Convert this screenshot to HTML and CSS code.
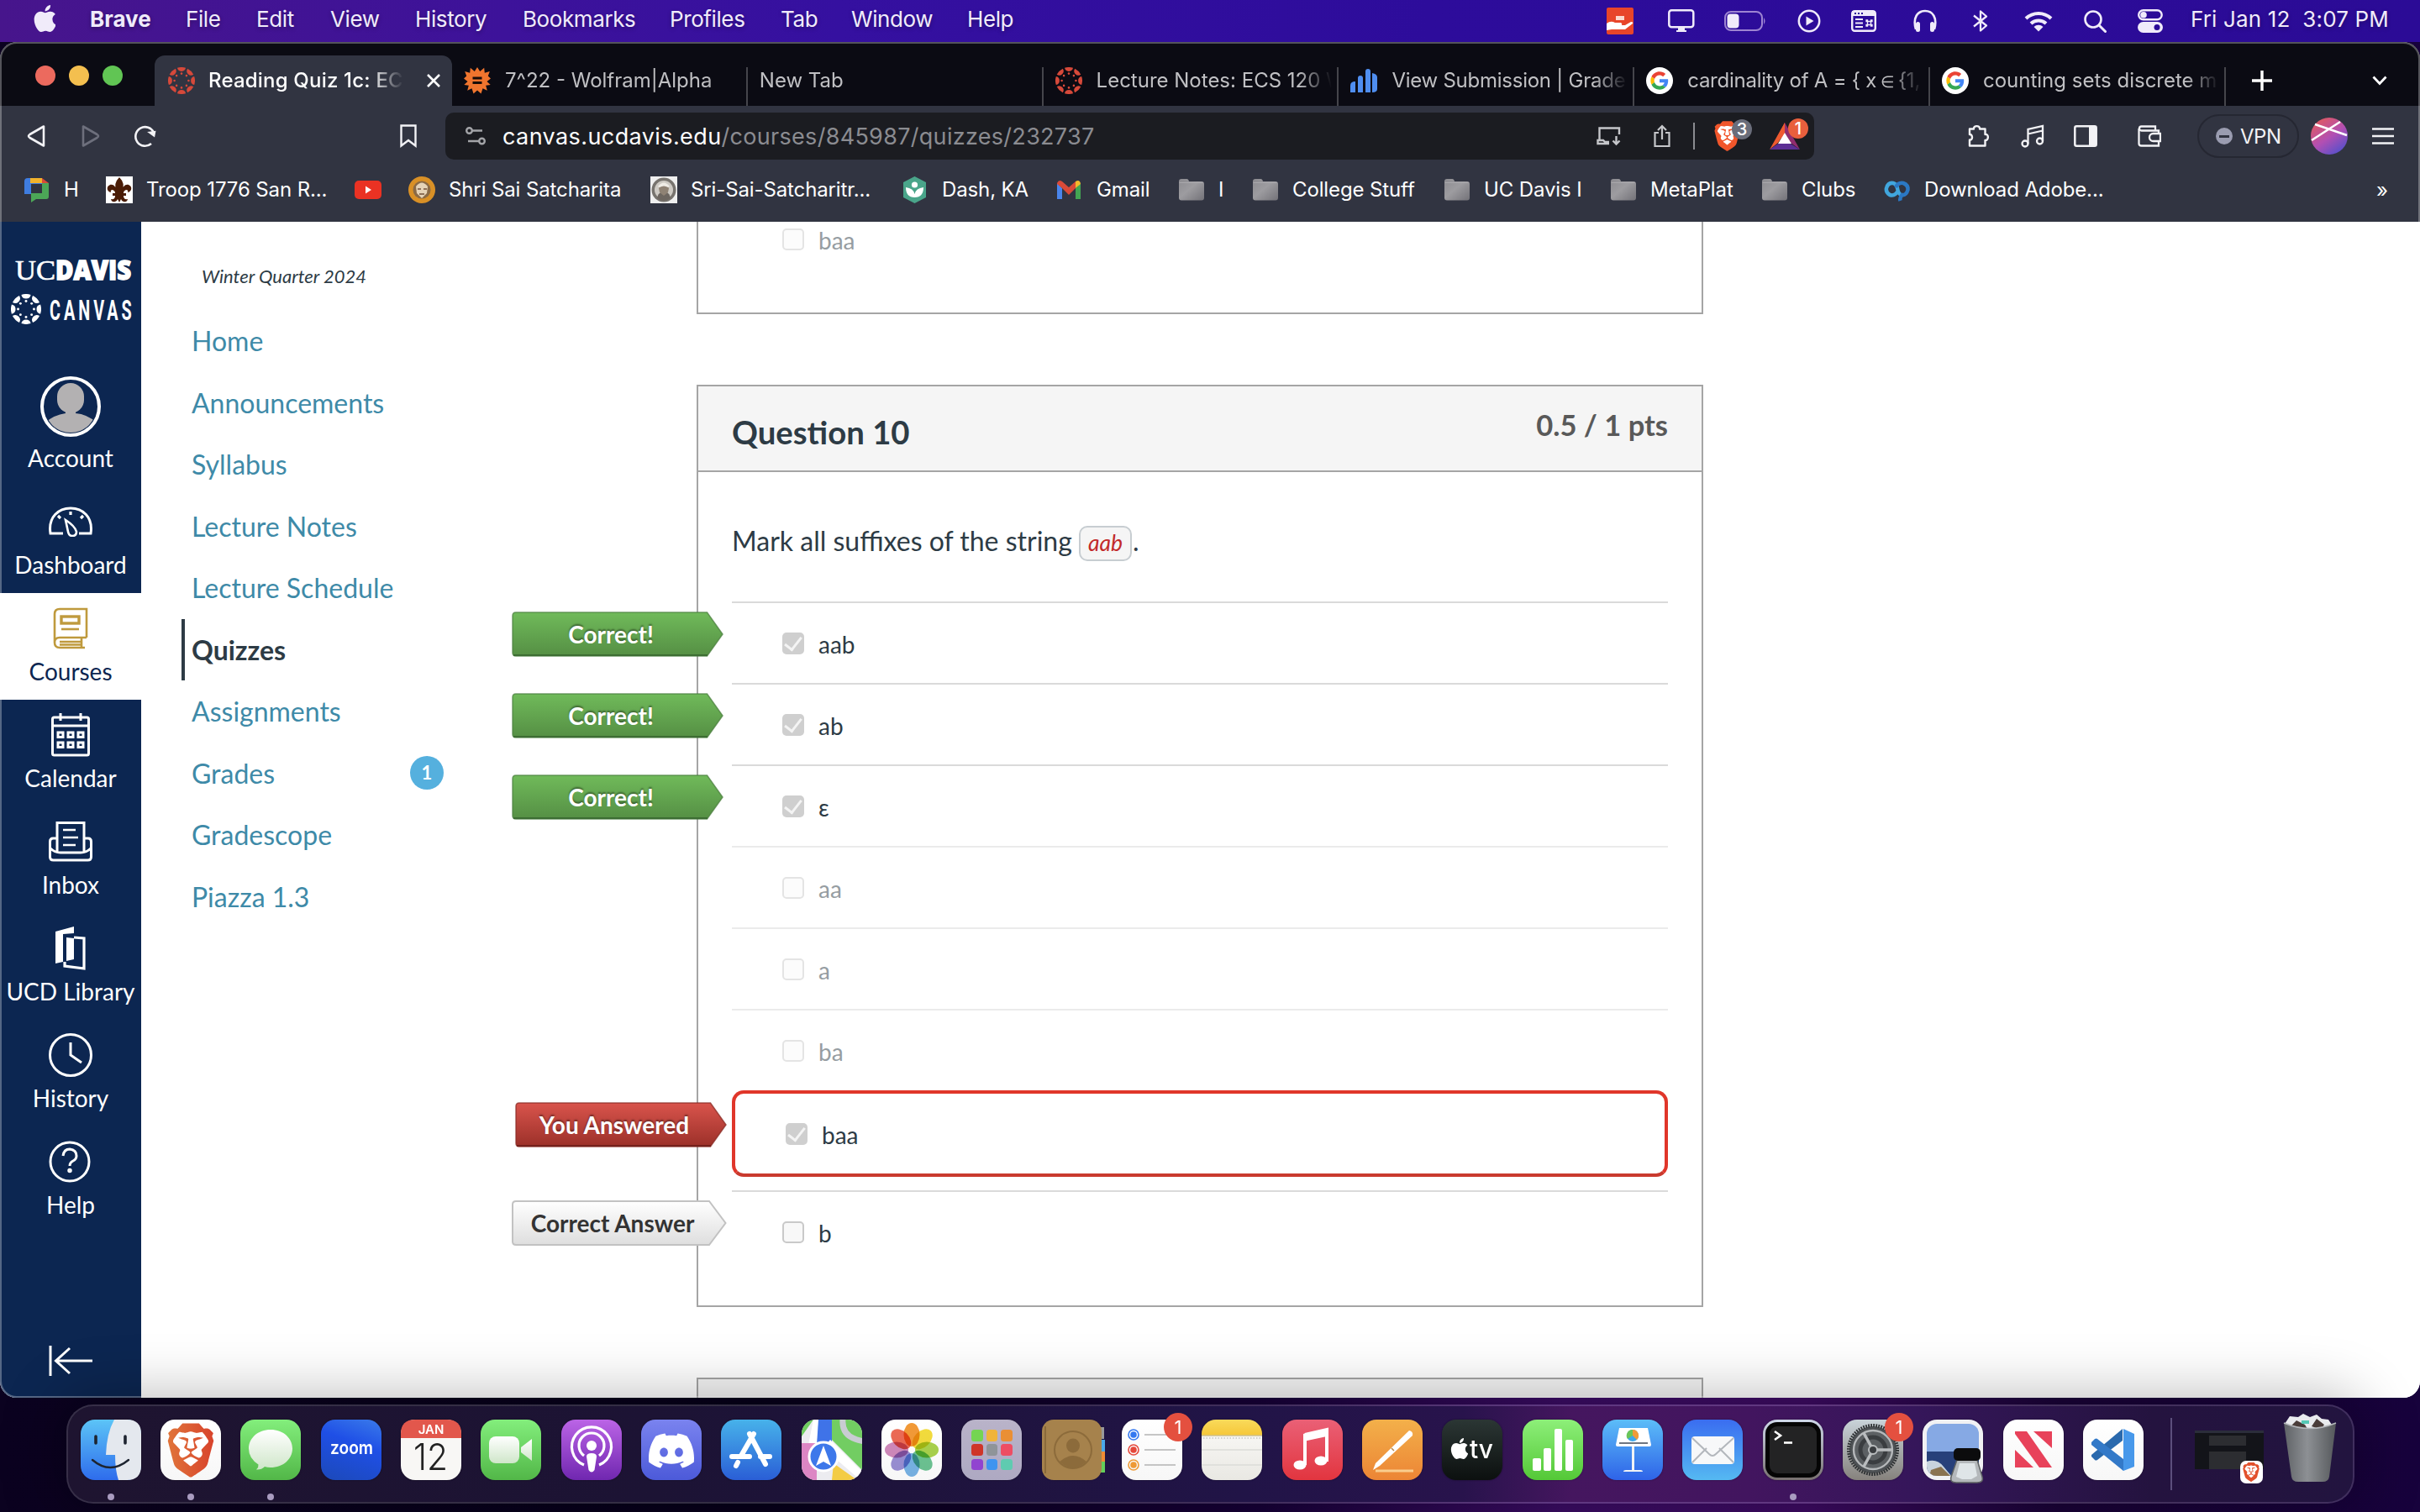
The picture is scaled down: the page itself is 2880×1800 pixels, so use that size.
FILE: index.html
```html
<!DOCTYPE html>
<html lang="en">
<head>
<meta charset="utf-8">
<title>Reading Quiz 1c: ECS 120</title>
<link rel="stylesheet" href="styles.css">
</head>
<body>
<svg class="defs" width="0" height="0" aria-hidden="true">
  <defs>
    <path id="seg" d="M-5-15.2A16 16 0 0 1 5-15.2A5.1 5.1 0 0 1-5-15.2z"/>
    <symbol id="ring" viewBox="-16 -16 32 32">
      <g id="half"><use href="#seg"/><use href="#seg" transform="rotate(45)"/><use href="#seg" transform="rotate(90)"/><use href="#seg" transform="rotate(135)"/><circle cy="-8.4" r="1.3"/><circle cx="5.9" cy="-5.9" r="1.3"/><circle cx="8.4" r="1.3"/><circle cx="5.9" cy="5.9" r="1.3"/></g>
      <use href="#half" transform="rotate(180)"/>
    </symbol>
    <symbol id="google" viewBox="-12 -12 72 72">
      <circle cx="24" cy="24" r="36" fill="#fff"/>
      <path fill="#EA4335" d="M24 9.5c3.54 0 6.71 1.22 9.21 3.6l6.85-6.85C35.9 2.38 30.47 0 24 0 14.62 0 6.51 5.38 2.56 13.22l7.98 6.19C12.43 13.72 17.74 9.5 24 9.5z"/>
      <path fill="#4285F4" d="M46.98 24.55c0-1.57-.15-3.09-.38-4.55H24v9.02h12.94c-.58 2.96-2.26 5.48-4.78 7.18l7.73 6c4.51-4.18 7.09-10.36 7.09-17.65z"/>
      <path fill="#FBBC05" d="M10.53 28.59c-.48-1.45-.76-2.99-.76-4.59s.27-3.14.76-4.59l-7.98-6.19C.92 16.46 0 20.12 0 24c0 3.88.92 7.54 2.56 10.78l7.97-6.19z"/>
      <path fill="#34A853" d="M24 48c6.48 0 11.93-2.13 15.89-5.81l-7.73-6c-2.15 1.45-4.92 2.3-8.16 2.3-6.26 0-11.57-4.22-13.47-9.91l-7.98 6.19C6.51 42.62 14.62 48 24 48z"/>
    </symbol>
    <linearGradient id="gBrave"><stop offset="0" stop-color="#e0743a"/><stop offset="1" stop-color="#d8432c"/></linearGradient>
    <symbol id="brave" viewBox="1.5 0 21 24">
      <path d="M5 3.5h14l1 5-3 8-5 4-5-4-3-8z" fill="#fff"/>
      <path d="M15.68 0l2.096 2.38s1.84-.512 2.709.358c.868.87 1.584 1.638 1.584 1.638l-.562 1.381.715 2.047s-2.104 7.98-2.35 8.955c-.486 1.919-.818 2.66-2.198 3.633-1.38.972-3.884 2.66-4.293 2.916-.409.256-.92.692-1.38.692-.46 0-.97-.436-1.38-.692a185.796 185.796 0 01-4.293-2.916c-1.38-.973-1.712-1.714-2.197-3.633-.247-.975-2.351-8.955-2.351-8.955l.715-2.047-.562-1.381s.716-.768 1.585-1.638c.868-.87 2.708-.358 2.708-.358L8.321 0h7.36zm-3.679 14.936c-.14 0-1.038.317-1.758.69-.72.373-1.242.637-1.409.742-.167.104-.065.301.087.409.152.107 2.194 1.69 2.393 1.866.198.175.489.464.687.464.198 0 .49-.29.688-.464.198-.175 2.24-1.759 2.392-1.866.152-.108.254-.305.087-.41-.167-.104-.689-.368-1.41-.741-.72-.373-1.617-.69-1.757-.69zm0-11.278s-.409.001-1.022.206-1.278.46-1.584.46c-.307 0-2.581-.434-2.581-.434S4.119 7.152 4.119 7.849c0 .697.339.881.68 1.243l2.02 2.149c.192.203.59.511.356 1.066-.235.555-.58 1.26-.196 1.977.384.716 1.042 1.194 1.464 1.115.421-.08 1.412-.598 1.776-.834.364-.237 1.518-1.19 1.518-1.554 0-.365-1.193-1.02-1.413-1.168-.22-.15-1.226-.725-1.247-.95-.02-.227-.012-.293.284-.851.297-.559.831-1.304.742-1.8-.089-.495-.95-.753-1.565-.986-.615-.232-1.799-.671-1.947-.74-.148-.068-.11-.133.339-.175.448-.043 1.719-.212 2.292-.052.573.16 1.552.403 1.632.532.079.13.149.134.067.579-.081.445-.5 2.581-.541 2.96-.04.38-.12.63.288.724.409.094 1.097.256 1.333.256s.924-.162 1.333-.256c.408-.093.329-.344.288-.723-.04-.38-.46-2.516-.541-2.961-.082-.445-.012-.45.067-.579.08-.129 1.059-.372 1.632-.532.573-.16 1.845.009 2.292.052.449.042.487.107.339.175-.148.069-1.332.508-1.947.74-.615.233-1.476.49-1.565.986-.09.496.445 1.241.742 1.8.297.558.304.624.284.85-.02.226-1.026.802-1.247.95-.22.15-1.413.804-1.413 1.169 0 .364 1.154 1.317 1.518 1.554.364.236 1.355.755 1.776.834.422.079 1.08-.4 1.464-1.115.384-.716.039-1.422-.195-1.977-.235-.555.163-.863.355-1.066l2.02-2.149c.341-.362.68-.546.68-1.243 0-.697-2.695-3.96-2.695-3.96s-2.274.436-2.58.436c-.307 0-.972-.256-1.585-.461-.613-.205-1.022-.206-1.022-.206z"/>
    </symbol>
    <symbol id="apple" viewBox="2 0 19 24"><path d="M12.152 6.896c-.948 0-2.415-1.078-3.96-1.04-2.04.027-3.91 1.183-4.961 3.014-2.117 3.675-.546 9.103 1.519 12.09 1.013 1.454 2.208 3.09 3.792 3.039 1.52-.065 2.09-.987 3.935-.987 1.831 0 2.35.987 3.96.948 1.637-.026 2.676-1.48 3.676-2.948 1.156-1.688 1.636-3.325 1.662-3.415-.039-.013-3.182-1.221-3.22-4.857-.026-3.04 2.48-4.494 2.597-4.559-1.429-2.09-3.623-2.324-4.39-2.376-2-.156-3.675 1.09-4.61 1.09zM15.53 3.83c.843-1.012 1.4-2.427 1.245-3.83-1.207.052-2.662.805-3.532 1.818-.78.896-1.454 2.338-1.273 3.714 1.338.104 2.715-.688 3.559-1.701"/></symbol>
    <linearGradient id="gFolder" x1="0" y1="0" x2="1" y2="1"><stop offset="0" stop-color="#8c8b90"/><stop offset=".45" stop-color="#9d9ca0"/><stop offset="1" stop-color="#737278"/></linearGradient>
    <symbol id="folder" viewBox="0 0 32 32"><path d="M1 6a3 3 0 0 1 3-3h6.500q1.500 0 2 1.500l.5 1.500h15a3 3 0 0 1 3 3v16.500a3 3 0 0 1-3 3H4a3 3 0 0 1-3-3z" fill="url(#gFolder)"/><path d="M1.500 7.500H30" stroke="#a9a8ac" stroke-width="1"/></symbol>
    <linearGradient id="gGreen" x2="0" y2="1"><stop offset="0" stop-color="#70ba5a"/><stop offset="1" stop-color="#558f44"/></linearGradient>
    <linearGradient id="gRed" x2="0" y2="1"><stop offset="0" stop-color="#d9544c"/><stop offset="1" stop-color="#9b3029"/></linearGradient>
    <linearGradient id="gGrey" x2="0" y2="1"><stop offset="0" stop-color="#fff"/><stop offset="1" stop-color="#dedede"/></linearGradient>
    <linearGradient id="gShine" x2="0" y2="1"><stop offset="0" stop-color="#fff"/><stop offset="1" stop-color="#cfe6c9"/></linearGradient>
    <symbol id="tagGreen" viewBox="0 0 252 54"><path d="M1 5q0-4 4-4h227.500l18.500 26-18.500 26H5q-4 0-4-4z" fill="url(#gGreen)" stroke="#4c8040" stroke-opacity=".75" stroke-width="1.500"/><path d="M2 52h231" stroke="#3d6d33" stroke-width="2"/></symbol>
  </defs>
</svg>

<header class="menubar">
  <nav class="menus">
    <svg class="apple" width="26" height="32"><use href="#apple"/></svg>
    <b>Brave</b><span>File</span><span>Edit</span><span>View</span><span>History</span><span>Bookmarks</span><span>Profiles</span><span>Tab</span><span>Window</span><span>Help</span>
  </nav>
  <div class="status">
    <svg width="32" height="32" viewBox="0 0 32 32"><rect width="32" height="32" rx="2" fill="#e8452a"/><path d="M0 19q5-4 10-1h7q2 1 1 3h4l7-4q3 0 2 2l-9 7H6l-6 1z" fill="#fff"/><path d="M11 10h10v5H11z" fill="#fbd9cf"/></svg>
    <svg width="32" height="28" viewBox="0 0 32 28"><rect x="1.300" y="1.300" width="29" height="20" rx="3" fill="none" stroke="#f0ebfa" stroke-width="2.500"/><path d="M12 22h8v3h2v2H10v-2h2z" fill="#f0ebfa"/></svg>
    <svg width="50" height="24" viewBox="0 0 50 24"><rect x="1" y="1" width="44" height="22" rx="7" fill="none" stroke="#9d84d2" stroke-width="2"/><rect x="3.500" y="3.500" width="14" height="17" rx="4" fill="#f0ebfa"/><path d="M47 8q3 4 0 8z" fill="#9d84d2"/></svg>
    <svg width="28" height="28" viewBox="0 0 28 28"><circle cx="14" cy="14" r="12.200" fill="none" stroke="#f0ebfa" stroke-width="2.500"/><path d="M10.500 8.500v11l9-5.500z" fill="#f0ebfa"/></svg>
    <svg width="30" height="26" viewBox="0 0 30 26"><rect x="1.200" y="1.200" width="27.600" height="23.600" rx="3" fill="none" stroke="#f0ebfa" stroke-width="2.400"/><path d="M1 1h28v6H1z" fill="#f0ebfa"/><path d="M4 4h2m2 0h2m2 0h2" stroke="#2b0b97" stroke-width="2"/><path d="M5 11h9M5 15.500h9M5 20h9" stroke="#f0ebfa" stroke-width="2"/><path d="M19.500 13.500h4v4h-4zM19.500 13.500h-1.500v-1.500h1.500zM23.500 13.500v-1.500h1.500v1.500zM19.500 17.500v1.500h-1.500v-1.500zM23.500 17.500h1.500v1.500h-1.500z" fill="none" stroke="#f0ebfa" stroke-width="1.300"/></svg>
    <svg width="28" height="28" viewBox="0 0 28 28"><path d="M3 24C-1 10 5 2 14 2s15 8 11 22" fill="none" stroke="#f0ebfa" stroke-width="2.600"/><rect x="3" y="15" width="5" height="12" rx="2.500" fill="#f0ebfa"/><rect x="20" y="15" width="5" height="12" rx="2.500" fill="#f0ebfa"/></svg>
    <svg width="18" height="28" viewBox="0 0 18 28"><path d="M1 7.500l15 12-7 6V2.500l7 6-15 12" fill="none" stroke="#f0ebfa" stroke-width="2.300" stroke-linejoin="round"/></svg>
    <svg width="34" height="25" viewBox="0 0 34 25"><path d="M2 9a21.500 21.500 0 0 1 30 0M8 15a13 13 0 0 1 18 0" fill="none" stroke="#f0ebfa" stroke-width="4"/><path d="M11.500 19a8 8 0 0 1 11 0L17 24.500z" fill="#f0ebfa"/></svg>
    <svg width="27" height="27" viewBox="0 0 27 27"><circle cx="11" cy="11" r="9.500" fill="none" stroke="#f0ebfa" stroke-width="2.600"/><path d="M18 18l7.500 7.500" stroke="#f0ebfa" stroke-width="3" stroke-linecap="round"/></svg>
    <svg width="30" height="28" viewBox="0 0 30 28"><rect x="1.200" y="1.200" width="27.500" height="11" rx="5.500" fill="none" stroke="#f0ebfa" stroke-width="2.400"/><circle cx="7" cy="6.700" r="3.800" fill="#f0ebfa"/><rect y="15" width="30" height="13" rx="6.500" fill="#f0ebfa"/><circle cx="23" cy="21.500" r="3.500" fill="#2b0b97"/></svg>
    <span class="clock">Fri Jan 12&nbsp; 3:07 PM</span>
  </div>
</header>

<section class="window">
  <div class="tabstrip">
    <div class="lights"><i class="red"></i><i class="yellow"></i><i class="green"></i></div>
    <div class="tab active"><svg width="32" height="32" fill="#d6493a"><use href="#ring"/></svg><span>Reading Quiz 1c: EC</span><svg width="16" height="16" viewBox="0 0 16 16"><path d="M1 1l14 14M15 1L1 15" stroke="#fff" stroke-width="2.600"/></svg></div>
    <div class="tab"><svg width="32" height="32" viewBox="-16 -16 32 32"><path fill="#f0752e" d="M0-16l3.200 5 5-4.300.6 6 6-1.700-2 5.600L16-2.500 11.500 1l4.200 4-5.500.7 1.600 6-5.300-2.400L4.500 15.500 0 11.500l-4.500 4-2-6.200-5.300 2.400 1.600-6-5.500-.7 4.200-4-4.500-3.500 3.200-2.900-2-5.600 6 1.700.6-6 5 4.300z"/><rect x="-5.500" y="-4.500" width="11" height="3" fill="#1a0d08"/><rect x="-5.500" y="1" width="11" height="3" fill="#1a0d08"/></svg><span>7^22 - Wolfram|Alpha</span></div>
    <div class="tab"><span>New Tab</span></div>
    <div class="tab"><svg width="32" height="32" fill="#d6493a"><use href="#ring"/></svg><span>Lecture Notes: ECS 120 W</span></div>
    <div class="tab"><svg width="32" height="32" viewBox="0 0 32 32" fill="#4f8ef0"><path d="M0 22q0-5 6-5v13H0zM9 13q0-3 3-3t3 3v17H9zM18 5q0-3 3-3t3 3v25h-6zM26 7q6 1 6 5v14q0 4-6 4z"/></svg><span class="tight">View Submission | Grade</span></div>
    <div class="tab"><svg width="32" height="32"><use href="#google"/></svg><span class="tight">cardinality of A = { x <small>∈</small> {1,</span></div>
    <div class="tab"><svg width="32" height="32"><use href="#google"/></svg><span>counting sets discrete m</span></div>
    <svg class="plus" width="24" height="24" viewBox="0 0 24 24"><path d="M12 0v24M0 12h24" stroke="#fff" stroke-width="3.400"/></svg>
    <svg class="chev" width="18" height="12" viewBox="0 0 18 12"><path d="M1.500 1.500L9 9.500l7.500-8" fill="none" stroke="#fff" stroke-width="2.800"/></svg>
  </div>

  <div class="toolbar">
    <svg width="24" height="28" viewBox="0 0 24 28"><path d="M20 2.500v23L3.500 16q-3-2 0-4z" fill="none" stroke="#f2f2f5" stroke-width="2.600" stroke-linejoin="round"/></svg>
    <svg width="24" height="28" viewBox="0 0 24 28"><path d="M3 2.500v23L19.500 16q3-2 0-4z" fill="none" stroke="#6d6f7c" stroke-width="2.600" stroke-linejoin="round"/></svg>
    <svg width="28" height="28" viewBox="0 0 28 28"><path d="M21 23A11.300 11.300 0 1 1 24 10" fill="none" stroke="#f2f2f5" stroke-width="2.600"/><path d="M16 10l10-3v8z" fill="#f2f2f5" transform="rotate(10 22 10)"/></svg>
    <svg width="20" height="28" viewBox="0 0 20 28"><path d="M1.500 1.500h17v24L10 19l-8.500 6.500z" fill="none" stroke="#f2f2f5" stroke-width="2.400"/></svg>
    <div class="urlbar">
      <svg width="24" height="24" viewBox="0 0 24 24" fill="none" stroke="#a3a4a8" stroke-width="2.400"><circle cx="4.500" cy="5.500" r="3.300"/><path d="M8 5.500h12"/><circle cx="19.500" cy="18" r="3.300"/><path d="M3 18h13"/></svg>
      <span class="url"><em>canvas.ucdavis.edu</em>/courses/845987/quizzes/232737</span>
      <svg class="u1" width="30" height="24" viewBox="0 0 30 24" fill="none" stroke="#c5c6ca" stroke-width="2.400"><path d="M15 21H1.500v-4H8l2 2h5M3.500 17V2.500H27V10M23.500 12v9M19.500 17.500l4 4 4-4"/></svg>
      <svg class="u2" width="20" height="28" viewBox="0 0 20 28" fill="none" stroke="#c5c6ca" stroke-width="2.200"><path d="M6 10H1.500v16h17V10H14M10 18V2M5 7l5-5 5 5"/></svg>
      <i class="vr"></i>
      <span class="ext e1"><svg width="31" height="36" fill="#f1562b"><use href="#brave"/></svg><b>3</b></span>
      <span class="ext e2"><svg width="36" height="32" viewBox="0 0 36 32"><path d="M18 0L9 17 18 20z" fill="#e3442f"/><path d="M18 0v12l-8 12-10 8z" fill="#ee5a30"/><path d="M18 0l18 32-11-8-7-12z" fill="#912d6f"/><path d="M0 32l10-7h15l11 7z" fill="#5c2f94"/><path d="M18 12l8 13H10z" fill="#fff"/></svg><b>1</b></span>
    </div>
    <svg width="28" height="28" viewBox="0 0 28 28"><path d="M9 5.500C8 1 17 1 16 5.500h6.500v6.500c4.500-1 4.500 7.500 0 7v6.500H4v-7c4 1 4-7 0-6.500V5.500z" fill="none" stroke="#f2f2f5" stroke-width="2.400" stroke-linejoin="round"/></svg>
    <svg width="28" height="28" viewBox="0 0 28 28" fill="none" stroke="#f2f2f5" stroke-width="2.300"><circle cx="5" cy="23" r="3.500"/><circle cx="22.500" cy="20" r="3.500"/><path d="M8.500 23V6L26 2v18M8.500 11.500L26 7.500"/></svg>
    <svg width="28" height="26" viewBox="0 0 28 26"><rect x="1.300" y="1.300" width="25.400" height="23.400" rx="2" fill="none" stroke="#f2f2f5" stroke-width="2.500"/><path d="M18 1h9v24h-9z" fill="#f2f2f5"/></svg>
    <svg width="28" height="26" viewBox="0 0 28 26" fill="none" stroke="#f2f2f5" stroke-width="2.300"><path d="M25 9V6.500H4.500a2.500 2.500 0 0 1 0-5H21V6M1.500 4v18q0 2.500 3 2.500H25V19"/><path d="M27 10h-8.500a4.500 4.500 0 0 0 0 9H27z"/></svg>
    <span class="vpn"><i></i>VPN</span>
    <svg width="44" height="44" viewBox="0 0 44 44"><defs><linearGradient id="gAv" x1=".2" y1="0" x2=".9" y2="1"><stop offset="0" stop-color="#e25a5c"/><stop offset=".5" stop-color="#b24fb3"/><stop offset="1" stop-color="#4550cf"/></linearGradient></defs><circle cx="22" cy="22" r="22" fill="url(#gAv)"/><path d="M1 27L35 5M5 8l38 13" stroke="#fff" stroke-width="2.600"/></svg>
    <svg width="26" height="20" viewBox="0 0 26 20"><path d="M0 1.500h26M0 10h26M0 18.500h26" stroke="#f2f2f5" stroke-width="2.600"/></svg>
  </div>

  <div class="bookmarks">
    <a><svg width="32" height="32" viewBox="0 0 32 32"><path d="M7 2h15v7H9v12H1V6q0-4 4-4z" fill="#3f7de0"/><path d="M8 2h14v6H8z" fill="#f2b32c"/><path d="M22 2l8 6v2h-8z" fill="#d94a38"/><path d="M22 8h8v16q0 3-3 3H15l-6 4V20h13z" fill="#4ca657"/></svg><span>H</span></a>
    <a><svg width="32" height="32" viewBox="0 0 32 32"><path fill="#fff" d="M0 0h32v32H0z"/><path fill="#4a1c06" d="M16 1q8 8 3 17c1-6 4-9 8-8 5 2 4 8-1 9q1-3-2-3-3 1-3 4h3v3h-3q0 5 5 4-1 4-5 3-2 0-3-3l-2 4-2-4q-1 3-3 3-4 1-5-3 5 1 5-4H8v-3h3q0-3-3-4-3 0-2 3c-5-1-6-7-1-9 4-1 7 2 8 8q-5-9 3-17z"/></svg><span>Troop 1776 San R...</span></a>
    <a><svg width="32" height="32" viewBox="0 0 32 32"><rect y="5" width="32" height="22" rx="5" fill="#ea3223"/><path d="M13 11.500v9l7-4.500z" fill="#fff"/></svg></a>
    <a><svg width="32" height="32" viewBox="0 0 32 32"><circle cx="16" cy="16" r="16" fill="#d99026"/><circle cx="16" cy="16" r="10.500" fill="#8a6a46"/><path d="M9 12q7-9 14 0l-1 8-6 6-6-6z" fill="#e5d3b8"/><path d="M11 15h4m3 0h4M13 21h6" stroke="#71513a" stroke-width="1.600"/></svg><span>Shri Sai Satcharita</span></a>
    <a><svg width="32" height="32" viewBox="0 0 32 32"><path fill="#efefef" d="M0 0h32v32H0z"/><circle cx="16" cy="16" r="14.500" fill="#77736e"/><circle cx="16" cy="16" r="11" fill="#cfcbc5"/><path d="M8 26q1-6 5-7h6q4 1 5 7-8 6-16 0z" fill="#6d6660"/><path d="M10 14q6-9 12 0l-1 5-5 4-5-4z" fill="#8f8274"/><path d="M9 12q7-9 14 0l-2 1q-5-3-10 0z" fill="#efece6"/></svg><span>Sri-Sai-Satcharitr...</span></a>
    <a><svg width="32" height="32" viewBox="0 0 32 32"><path d="M15.500 0L29 7v18l-13.500 7L2 25V7z" fill="#4aa58a"/><circle cx="15.500" cy="10" r="3.600" fill="#fff"/><path d="M5 13q9 1 10.500 8Q17 14 26 13q0 12-10.500 12Q5 25 5 13z" fill="#fff"/></svg><span>Dash, KA</span></a>
    <a><svg width="32" height="32" viewBox="0 0 32 32"><path d="M1 8v19h6V14z" fill="#4a85ec"/><path d="M23 14v13h6V8z" fill="#43a553"/><path d="M1 8q2-5 6-2l8 7 8-7v8l-8 8-8-8-6-5z" fill="#d94a38"/><path d="M23 6q5-3 6 3l-6 5z" fill="#f2b92c"/></svg><span>Gmail</span></a>
    <a><svg width="32" height="32"><use href="#folder"/></svg><span>I</span></a>
    <a><svg width="32" height="32"><use href="#folder"/></svg><span>College Stuff</span></a>
    <a><svg width="32" height="32"><use href="#folder"/></svg><span>UC Davis I</span></a>
    <a><svg width="32" height="32"><use href="#folder"/></svg><span>MetaPlat</span></a>
    <a><svg width="32" height="32"><use href="#folder"/></svg><span>Clubs</span></a>
    <a><svg width="32" height="32" viewBox="0 0 32 32" fill="none" stroke-width="4.500"><path d="M17 17q-4 7-10 5-5-3-4-8 2-7 8-6 4 1 5 6 1 6 4 8" stroke="#41a6dd"/><path d="M14 13q3-6 9-5 6 2 5.500 8-2 7-7 6-3 4-2 7" stroke="#2b78c4"/></svg><span>Download Adobe...</span></a>
    <a class="more">»</a>
  </div>

  <div class="page">
    <nav class="rail">
      <svg class="logo" width="168" height="188" viewBox="0 0 168 188" fill="#fff">
        <text x="18" y="69" class="uc" textLength="48" lengthAdjust="spacingAndGlyphs">UC</text>
        <text x="66" y="69" class="davis" textLength="90" lengthAdjust="spacingAndGlyphs">DAVIS</text>
        <use href="#ring" x="13" y="86" width="36" height="36"/>
        <text transform="translate(59 117) scale(.6 1)" class="canvas" textLength="163" lengthAdjust="spacing">CANVAS</text>
      </svg>
      <a class="item"><span class="ico"><svg width="72" height="72" viewBox="0 0 72 72"><circle cx="36" cy="36" r="34" fill="#0c2651" stroke="#fff" stroke-width="4"/><clipPath id="cA"><circle cx="36" cy="36" r="31"/></clipPath><g clip-path="url(#cA)" fill="#b3b1b2"><rect x="20" y="8" width="32" height="36" rx="16"/><path d="M30 38h12v6q14 1 26 12v14H6V55q10-9 24-11z"/></g></svg></span>Account</a>
      <a class="item"><span class="ico mid"><svg width="52" height="36" viewBox="0 0 52 36" fill="none" stroke="#fff" stroke-width="3"><path d="M17 32H2C-1 12 12 2 26 2s27 10 24 30H36"/><path d="M20 16q11 7 13 14 0 5-5 5-4 0-5-5z" stroke-width="2.600"/><path d="M26 6v4M11 11l3 3M41 11l-3 3" stroke-width="3.200"/></svg></span>Dashboard</a>
      <a class="item on"><span class="ico mid"><svg width="42" height="50" viewBox="0 0 42 50" fill="none" stroke="#bf9a3d" stroke-width="2.600"><path d="M40 36V2H8Q2 2 2 8v34q0 6 6 6h30M40 36H8q-6 0-6 6M34 36v12M34 41H8M34 44.500H8"/><rect x="10" y="11" width="21" height="8" stroke-width="3.400"/><path d="M10 26h21" /></svg></span>Courses</a>
      <a class="item"><span class="ico mid"><svg width="46" height="52" viewBox="0 0 46 52" fill="none" stroke="#fff" stroke-width="3"><rect x="1.500" y="5" width="43" height="45" rx="2"/><path d="M1 15h44M11 0v9M35 0v9"/><g stroke-width="3"><rect x="8" y="23" width="6" height="5.500"/><rect x="20" y="23" width="6" height="5.500"/><rect x="32" y="23" width="6" height="5.500"/><rect x="8" y="35" width="6" height="5.500"/><rect x="20" y="35" width="6" height="5.500"/><rect x="32" y="35" width="6" height="5.500"/></g></svg></span>Calendar</a>
      <a class="item"><span class="ico mid"><svg width="52" height="48" viewBox="0 0 52 48" fill="none" stroke="#fff" stroke-width="3"><path d="M10 36V1.500h32V36M10 20H5q-3.500 0-3.500 4v18q0 4 4 4h41q4 0 4-4V24q0-4-3.500-4h-5M2 32q5 5 12 5h24q7 0 12-5"/><path d="M17 10h15M17 19h18M17 28h15" stroke-width="2.600"/></svg></span>Inbox</a>
      <a class="item"><span class="ico mid"><svg width="36" height="52" viewBox="0 0 36 52" fill="#fff"><path d="M0 6l22-6v8L9 9v33L0 44z"/><path d="M13 13l9 1v25l-9 2z"/><path d="M22 13l12 1v36L11 47V42" fill="none" stroke="#fff" stroke-width="3.200"/></svg></span>UCD Library</a>
      <a class="item"><span class="ico mid"><svg width="52" height="52" viewBox="0 0 52 52" fill="none" stroke="#fff" stroke-width="3"><circle cx="26" cy="26" r="24.500"/><path d="M26 11v15l13 9"/></svg></span>History</a>
      <a class="item"><span class="ico mid"><svg width="52" height="50" viewBox="0 0 52 50" fill="none" stroke="#fff" stroke-width="3"><circle cx="25" cy="25" r="23"/><path d="M17 18q1-8 8-8 8 1 8 8 0 4-4 6-4 2-4 6"/><circle cx="25" cy="35.500" r="1.500" stroke-width="2.500"/></svg></span>Help</a>
      <svg class="collapse" width="52" height="36" viewBox="0 0 52 36" fill="none" stroke="#fff" stroke-width="3"><path d="M2 0v36M8 18h44M25 3L8.500 18 25 33"/></svg>
    </nav>

    <nav class="course">
      <p class="term">Winter Quarter 2024</p>
      <a>Home</a><a>Announcements</a><a>Syllabus</a><a>Lecture Notes</a><a>Lecture Schedule</a><a class="cur">Quizzes</a><a>Assignments</a><a>Grades<b>1</b></a><a>Gradescope</a><a>Piazza 1.3</a>
    </nav>

    <main class="quiz">
      <section class="box prev"><div class="ans dim"><i class="cb"></i><span>baa</span></div></section>
      <section class="box">
        <header><h2>Question 10</h2><span class="pts">0.5 / 1 pts</span></header>
        <p class="ask"><span>Mark all suffixes of the string</span><code>aab</code><span>.</span></p>
        <div class="ans"><span class="tag"><svg width="252" height="54"><use href="#tagGreen"/></svg><b>Correct!</b></span><i class="cb on"></i><span>aab</span></div>
        <div class="ans"><span class="tag"><svg width="252" height="54"><use href="#tagGreen"/></svg><b>Correct!</b></span><i class="cb on"></i><span>ab</span></div>
        <div class="ans"><span class="tag"><svg width="252" height="54"><use href="#tagGreen"/></svg><b>Correct!</b></span><i class="cb on"></i><span>ε</span></div>
        <div class="ans dim"><i class="cb"></i><span>aa</span></div>
        <div class="ans dim"><i class="cb"></i><span>a</span></div>
        <div class="ans dim"><i class="cb"></i><span>ba</span></div>
        <div class="ans wrong"><span class="tag"><svg width="252" height="54" viewBox="0 0 252 54"><path d="M1 5q0-4 4-4h227.500l18.500 26-18.500 26H5q-4 0-4-4z" fill="url(#gRed)" stroke="#8a2c26" stroke-opacity=".75" stroke-width="1.500"/><path d="M2 52h231" stroke="#74201b" stroke-width="2"/></svg><b>You Answered</b></span><i class="cb on"></i><span>baa</span></div>
        <div class="ans last"><span class="tag plain"><svg width="256" height="54" viewBox="0 0 256 54"><path d="M1 5q0-4 4-4h230l19.500 26L235 53H5q-4 0-4-4z" fill="url(#gGrey)" stroke="#c2c2c2" stroke-width="2"/></svg><b>Correct Answer</b></span><i class="cb"></i><span>b</span></div>
      </section>
      <section class="box next"><header></header></section>
    </main>
  </div>
</section>

<footer class="dockbar">
  <div class="dock">
    <div class="app run finder"><svg viewBox="0 0 72 72"><path d="M40 0h15q17 0 17 17v38q0 17-17 17H45q-4-12-4-30H30Q31 16 40 0z" fill="#e4e8ee"/><path d="M18 20v8M53 20v8" stroke="#1d2430" stroke-width="3.600" stroke-linecap="round"/><path d="M14 48q21 18 43 0" fill="none" stroke="#1d2430" stroke-width="2.400" stroke-linecap="round"/></svg></div>
    <div class="app run white"><svg viewBox="0 0 72 72"><svg x="8" y="4" width="56" height="65" fill="url(#gBrave)"><use href="#brave"/></svg></svg></div>
    <div class="app run messages"><svg viewBox="0 0 72 72"><path d="M36 12c15 0 26 10 26 22.500S51 57 36 57q-4 0-7-1-4 4-10 3.500 3-3 2.500-6Q10 46 10 34.500C10 22 21 12 36 12z" fill="url(#gShine)"/></svg></div>
    <div class="app zoomapp"><svg viewBox="0 0 72 72"><text x="11" y="41" class="zt" textLength="51" lengthAdjust="spacingAndGlyphs">zoom</text></svg></div>
    <div class="app cal"><svg viewBox="0 0 72 72"><path d="M0 22V17Q0 0 17 0h38q17 0 17 17v5z" fill="#e2574c"/><text x="36" y="17" class="mon" text-anchor="middle">JAN</text><text x="15" y="60" class="day" textLength="41" lengthAdjust="spacingAndGlyphs">12</text></svg></div>
    <div class="app facetime"><svg viewBox="0 0 72 72"><rect x="10" y="20" width="36" height="32" rx="8" fill="url(#gShine)"/><path d="M48 33l13-10v26L48 39z" fill="url(#gShine)"/></svg></div>
    <div class="app podcasts"><svg viewBox="0 0 72 72"><g fill="none" stroke="#fff" stroke-width="3.200"><path d="M27 54a23.500 23.500 0 1 1 18 0"/><path d="M27 43a15 15 0 1 1 18 0"/></g><circle cx="36" cy="31" r="6" fill="#fff"/><path d="M30 44q0-4 6-4t6 4l-2.500 16q-3.500 5-7 0z" fill="#fff"/></svg></div>
    <div class="app discord"><svg viewBox="0 0 72 72"><svg x="9" y="10" width="54" height="54" viewBox="0 0 24 24" fill="#fff"><path d="M20.317 4.3698a19.7913 19.7913 0 00-4.8851-1.5152.0741.0741 0 00-.0785.0371c-.211.3753-.4447.8648-.6083 1.2495-1.8447-.2762-3.68-.2762-5.4868 0-.1636-.3933-.4058-.8742-.6177-1.2495a.077.077 0 00-.0785-.037 19.7363 19.7363 0 00-4.8852 1.515.0699.0699 0 00-.0321.0277C.5334 9.0458-.319 13.5799.0992 18.0578a.0824.0824 0 00.0312.0561c2.0528 1.5076 4.0413 2.4228 5.9929 3.0294a.0777.0777 0 00.0842-.0276c.4616-.6304.8731-1.2952 1.226-1.9942a.076.076 0 00-.0416-.1057c-.6528-.2476-1.2743-.5495-1.8722-.8923a.077.077 0 01-.0076-.1277c.1258-.0943.2517-.1923.3718-.2914a.0743.0743 0 01.0776-.0105c3.9278 1.7933 8.18 1.7933 12.0614 0a.0739.0739 0 01.0785.0095c.1202.099.246.1981.3728.2924a.077.077 0 01-.0066.1276 12.2986 12.2986 0 01-1.873.8914.0766.0766 0 00-.0407.1067c.3604.698.7719 1.3628 1.225 1.9932a.076.076 0 00.0842.0286c1.961-.6067 3.9495-1.5219 6.0023-3.0294a.077.077 0 00.0313-.0552c.5004-5.177-.8382-9.6739-3.5485-13.6604a.061.061 0 00-.0312-.0286zM8.02 15.3312c-1.1825 0-2.1569-1.0857-2.1569-2.419 0-1.3332.9555-2.4189 2.157-2.4189 1.2108 0 2.1757 1.0952 2.1568 2.419 0 1.3332-.9555 2.4189-2.1569 2.4189zm7.9748 0c-1.1825 0-2.1569-1.0857-2.1569-2.419 0-1.3332.9554-2.4189 2.1569-2.4189 1.2108 0 2.1757 1.0952 2.1568 2.419 0 1.3332-.946 2.4189-2.1568 2.4189Z"/></svg></svg></div>
    <div class="app store"><svg viewBox="0 0 72 72"><g stroke="#fff" stroke-width="6" stroke-linecap="round"><path d="M39 17L24 43M34 17l19 36M13 44h21M47 44h11M20 51l-2 4"/></g></svg></div>
    <div class="app maps"><svg viewBox="0 0 72 72"><clipPath id="cM"><rect width="72" height="72" rx="17"/></clipPath><g clip-path="url(#cM)"><path fill="#ececf0" d="M0 0h72v72H0z"/><path d="M0 0h14L0 20z" fill="#6fce5f"/><path d="M14 0h20v30H8z" fill="#fff"/><path d="M20 0h16v30H18z" fill="#3f73e8"/><path d="M36 0h36v60L36 24z" fill="#72cd62"/><path d="M49 0q-2 22 26 26" fill="none" stroke="#c9ccd2" stroke-width="7"/><path d="M0 28h18v44H0z" fill="#dc86c4"/><path d="M38 52l28 20H36z" fill="#f3cc45"/><path d="M34 24l38 38v12L26 34z" fill="#fff"/></g><circle cx="26" cy="44" r="17" fill="#3d78ea" stroke="#fff" stroke-width="3"/><path d="M26 31l9 24-9-5-9 5z" fill="#fff"/></svg></div>
    <div class="app white photos"><svg viewBox="-36 -36 72 72"><g><ellipse cy="-18" rx="9.500" ry="14" fill="#f29a37"/><ellipse cy="-18" rx="9.500" ry="14" fill="#f3dc3c" transform="rotate(45)"/><ellipse cy="-18" rx="9.500" ry="14" fill="#a9d24c" transform="rotate(90)"/><ellipse cy="-18" rx="9.500" ry="14" fill="#6cc493" transform="rotate(135)"/><ellipse cy="-18" rx="9.500" ry="14" fill="#78b3e6" transform="rotate(180)"/><ellipse cy="-18" rx="9.500" ry="14" fill="#9a8fd4" transform="rotate(225)"/><ellipse cy="-18" rx="9.500" ry="14" fill="#d089bb" transform="rotate(270)"/><ellipse cy="-18" rx="9.500" ry="14" fill="#ec6a55" transform="rotate(315)"/></g></svg></div>
    <div class="app launch"><svg viewBox="0 0 72 72"><g><rect x="12" y="12" width="14" height="14" rx="3.500" fill="#74d552"/><rect x="30" y="12" width="13" height="14" rx="3.500" fill="#f0b43a"/><rect x="47" y="12" width="14" height="14" rx="3.500" fill="#ea8f35"/><rect x="12" y="29" width="14" height="14" rx="3.500" fill="#cf3529"/><rect x="30" y="29" width="13" height="14" rx="3.500" fill="#8f9499"/><rect x="47" y="29" width="14" height="14" rx="3.500" fill="#ee4d63"/><rect x="12" y="47" width="14" height="13" rx="3.500" fill="#9144d0"/><rect x="30" y="47" width="13" height="13" rx="3.500" fill="#3f94f0"/><rect x="47" y="47" width="14" height="13" rx="3.500" fill="#5fcbb0"/></g></svg></div>
    <div class="app contacts"><svg viewBox="0 0 72 72"><path d="M66 9h8v14h-8z" fill="#9a9a9a"/><path d="M66 24h9v14h-9z" fill="#4aa7e8"/><path d="M66 38h9v12h-9z" fill="#ef8b35"/><path d="M66 50h9v13h-9z" fill="#63cf5a"/><rect width="71" height="72" rx="14" fill="#a6824c"/><path d="M4 8v56" stroke="#8a6a3b" stroke-width="2"/><g fill="#8c6b3b"><circle cx="37" cy="36" r="22" fill="none" stroke="#8c6b3b" stroke-width="2"/><ellipse cx="37" cy="31" rx="8" ry="8.500"/><path d="M21 50q16-14 32 0-16 15-32 0z"/></g></svg></div>
    <div class="app white"><svg viewBox="0 0 72 72"><path d="M27 18h37M27 36h37M27 54h37" stroke="#b4b4b4" stroke-width="1.600"/><g fill="none" stroke-width="1.600"><circle cx="14" cy="18" r="6" stroke="#3478f0"/><circle cx="14" cy="36" r="6" stroke="#e5483b"/><circle cx="14" cy="54" r="6" stroke="#ee9a35"/></g><circle cx="14" cy="18" r="3.800" fill="#3478f0"/><circle cx="14" cy="36" r="3.800" fill="#e5483b"/><circle cx="14" cy="54" r="3.800" fill="#ee9a35"/></svg><b class="count">1</b></div>
    <div class="app notes"><svg viewBox="0 0 72 72"><path d="M0 19h72" stroke="#b9a55c" stroke-width="1.200"/><path d="M2 22h68" stroke="#c5c5c2" stroke-width="1.500" stroke-dasharray="1.500 2"/><path d="M0 36h72M0 54h72" stroke="#dcdcd8" stroke-width="1.600"/></svg></div>
    <div class="app music"><svg viewBox="0 0 72 72"><path d="M27 18l26-6v38" fill="none" stroke="#fff" stroke-width="4"/><path d="M25 17l28-6v9l-28 6z" fill="#fff"/><path d="M25 18h4v36h-4z" fill="#fff"/><ellipse cx="21" cy="54" rx="7.500" ry="5.500" fill="#fff"/><ellipse cx="46" cy="49" rx="7.500" ry="5.500" fill="#fff"/></svg></div>
    <div class="app pages"><svg viewBox="0 0 72 72"><path d="M16 61h45" stroke="#f9cd8e" stroke-width="3"/><path d="M56 13q5 1 4 6L21 55l-8 5 3-8z" fill="#fff"/><path d="M35 34l3 3" stroke="#b58347" stroke-width="1.500"/></svg></div>
    <div class="app tv"><svg viewBox="0 0 72 72"><svg x="10" y="22" width="21" height="25" fill="#fff"><use href="#apple"/></svg><text x="33" y="46" class="tvt" textLength="28" lengthAdjust="spacingAndGlyphs">tv</text></svg></div>
    <div class="app numbers"><svg viewBox="0 0 72 72" fill="#fff"><rect x="12" y="46" width="10" height="15" rx="2"/><rect x="25" y="34" width="9" height="27" rx="2"/><rect x="38" y="11" width="9" height="50" rx="2"/><rect x="51" y="24" width="9" height="37" rx="2"/></svg></div>
    <div class="app keynote"><svg viewBox="0 0 72 72"><path d="M20 10h34l4 20q0 2-2 2H18q-2 0-2-2z" fill="#fff"/><path d="M20 28h34" stroke="#6f7680" stroke-width="2"/><path d="M35 32h3v28h7q3 0 3 2H25q0-2 3-2h7z" fill="#f1f3f5"/><circle cx="36" cy="19" r="7" fill="#3fa7ea"/><path d="M36 19V12a7 7 0 0 1 5 12z" fill="#f09a38"/><path d="M36 19V12a7 7 0 0 0-6 11z" fill="#6ac558"/></svg></div>
    <div class="app mail"><svg viewBox="0 0 72 72"><rect x="11" y="20" width="51" height="33" rx="4" fill="#f7f8f9"/><path d="M12 51l17-17M61 51L44 34M12 22l20 19q4 4 8 0l21-19" fill="none" stroke="#b3b7bc" stroke-width="2"/></svg></div>
    <div class="app run term"><svg viewBox="0 0 72 72"><rect x="3" y="3" width="66" height="66" rx="14" fill="#050505"/><rect x="8" y="8" width="56" height="56" rx="9" fill="#232324"/><path d="M14 14l7 5-7 5" fill="none" stroke="#fff" stroke-width="2.600"/><path d="M25 27.500h10" stroke="#fff" stroke-width="2.600"/></svg></div>
    <div class="app settings"><svg viewBox="-36 -36 72 72"><circle r="28" fill="#4d5154"/><circle r="29" fill="none" stroke="#313436" stroke-width="4" stroke-dasharray="1.800 1.237"/><circle r="23" fill="#5c6063" stroke="#b5b8ba" stroke-width="2.400"/><circle r="15" fill="none" stroke="#3a3d40" stroke-width="5"/><path d="M0 0l-11-20M0 0h23M0 0l-11 20" stroke="#b9bcbe" stroke-width="3.600"/><circle r="5" fill="#3a3d40" stroke="#b9bcbe" stroke-width="2"/></svg><b class="count">1</b></div>
    <div class="app preview"><svg viewBox="0 0 72 72"><clipPath id="cP"><rect x="5" y="5" width="62" height="62" rx="12"/></clipPath><rect width="72" height="72" rx="17" fill="#f1f1f3"/><g clip-path="url(#cP)"><path fill="#86a9e4" d="M0 0h72v39H0z"/><path fill="#27407a" d="M0 38h72v34H0z"/><path fill="#c8d3dd" d="M5 50q12-4 20 6l10 12H5z"/><path fill="#8a7350" d="M10 60l12-4 12 12H8z"/></g><path d="M41 48h24l6 20q2 7-6 7H40q-8 0-6-7z" fill="#b4b8bb" stroke="#5d6163" stroke-width="1.500"/><path d="M44 52h18l3 15-7 4H47l-7-3z" fill="#dfe5e8"/><rect x="37" y="34" width="32" height="15" rx="5" fill="#0c0c0d"/></svg></div>
    <div class="app white"><svg viewBox="0 0 72 72" fill="#e8425a"><path d="M14 14h14l30 43H43L14 17z"/><path d="M36 14h22v20z"/><path d="M14 36l22 21H14z"/></svg></div>
    <div class="app white"><svg viewBox="0 0 72 72"><path d="M10 42l37-31v14L17 48q-2 1-3 0l-4-4z" fill="#2a69ad"/><path d="M10 27l4-4q2-1 3 0l31 24v14L10 30z" fill="#3379c8"/><path d="M48 11l13 6v39l-13 5z" fill="#4798ea"/></svg></div>
    <i class="sep"></i>
    <div class="mini"><i></i><i></i><span><svg width="20" height="23" fill="#e2512c"><use href="#brave"/></svg></span></div>
    <svg class="trash" width="64" height="82" viewBox="0 0 64 82"><defs><linearGradient id="gT"><stop offset="0" stop-color="#5f6266"/><stop offset=".45" stop-color="#8d9094"/><stop offset="1" stop-color="#55585b"/></linearGradient></defs><path d="M2 12L8 3l10 1 6-4 8 4 8-3 6 5 8 1 4 6-4 5H6z" fill="#e9ebee"/><path d="M10 14l6-6 10 5 3 5H12zM34 15l6-9 9 7-4 6z" fill="#4a3d3a"/><path d="M22 8h9v4h-9z" fill="#55c9b5"/><path d="M1 11q31 13 62 0l-8 64q-1 6-8 6H18q-7 0-8-6z" fill="url(#gT)"/><path d="M1 11q31 13 62 0" fill="none" stroke="#b4b7bb" stroke-width="1.500"/></svg>
  </div>
</footer>
</body>
</html>
```
FILE: styles.css
```css
* { box-sizing: border-box; }
html, body { margin: 0; }
body {
  width: 2880px; height: 1800px; overflow: hidden;
  display: flex; flex-direction: column;
  font-family: Inter, "Liberation Sans", sans-serif;
  background: linear-gradient(90deg, #0b0220 0, #07011a 900px, #170138 1500px, #3c0c66 1860px, #3e0b64 2150px, #1a0338 2450px, #17023c 100%);
}
.defs { position: absolute; }
svg { flex: none; display: block; }
h2, p { margin: 0; }
i, em { font-style: normal; }

/* menu bar */
.menubar {
  height: 50px; flex: none; display: flex; justify-content: space-between;
  background: linear-gradient(90deg, #47158c 0, #3d129a 600px, #3510a0 1000px, #2d0c9b 1700px, #2b0b96 100%);
  color: #f0ebfa; font-size: 26px; line-height: 45px; text-shadow: 0 2px 5px rgba(0,0,0,.3);
}
.menus { display: grid; grid-template-columns: 67px 114px 84px 88px 101px 128px 175px 132px 84px 138px 80px; padding-left: 40px; white-space: nowrap; }
.menus span { letter-spacing: -.4px; }
.apple { fill: #f0ebfa; margin-top: 6px; }
.status { display: grid; grid-template-columns: 73px 67px 87px 64px 74px 71px 61px 71px 64px 63px 273px; align-items: center; white-space: nowrap; }
.clock { align-self: start; letter-spacing: .15px; }

/* browser window */
.window {
  height: 1614px; flex: none; display: flex; flex-direction: column; position: relative;
  border-radius: 20px; overflow: hidden; background: #fff;
}
.window::after {
  content: ""; position: absolute; inset: 0; border-radius: 20px; pointer-events: none;
  border: 2px solid rgba(255,255,255,.3);
}
.tabstrip { height: 76px; flex: none; background: #0b0b13; display: flex; align-items: flex-end; color: #c0c0c3; font-size: 24px; }
.lights { width: 184px; height: 60px; padding: 12px 0 0 42px; display: flex; gap: 16px; }
.lights i { width: 24px; height: 24px; border-radius: 50%; }
.red { background: #ec6a5e; } .yellow { background: #f4bf4f; } .green { background: #61c554; }
.tab { width: 351.800px; height: 60px; display: flex; align-items: center; white-space: nowrap; }
.tab + .tab { padding: 0 4px 0 14px; gap: 17px; background: linear-gradient(#45454b, #45454b) right bottom / 2px 46px no-repeat; }
.tab.active { width: 354px; padding: 0 14px 0 16px; gap: 16px; background: #313441; border-radius: 12px 12px 0 0; color: #fff; font-weight: 500; letter-spacing: .2px; }
.tab span { flex: 1; min-width: 0; overflow: hidden; padding-bottom: 2px; mask-image: linear-gradient(90deg, #000 calc(100% - 44px), transparent calc(100% - 4px)); }
.tab span.tight { letter-spacing: -.25px; }
.tab small { font-size: 19px; margin: 0 -2px; }
.tab.active span { max-width: 236px; margin-right: 0; }
.active svg:last-child { margin-left: auto; }
.plus { margin: 0 0 18px 31px; }
.chev { margin: 0 0 24px 119px; }

.toolbar { height: 72px; flex: none; background: #313441; display: grid; align-items: center; padding-left: 32px;
  grid-template-columns: 64px 63px 317px 54px 1810px 65px 63px 76px 71px 135px 73px 57px; }
.urlbar { width: 1629px; height: 56px; border-radius: 10px; background: #1b1c21; display: flex; align-items: center; padding-left: 24px; }
.url { margin-left: 20px; width: 1300px; flex: none; font-size: 27px; color: #8b8c91; white-space: nowrap; letter-spacing: .3px; }
.url em { color: #fff; letter-spacing: .4px; }
.u1 { margin: 0 38px 0 2px; }
.vr { width: 2px; height: 32px; background: #8b8c91; margin: 0 23px 0 27px; flex: none; }
.ext { position: relative; width: 66px; flex: none; }
.ext.e2 { width: 36px; }
.ext b { position: absolute; left: 21px; top: -2px; width: 24px; height: 24px; border-radius: 12px; background: #6a6d7a; color: #fff; font-size: 20px; line-height: 24px; font-weight: 500; text-align: center; }
.e2 b { background: #e85f3d; left: 22px; top: -5px; }
.vpn { width: 121px; height: 52px; border: 2px solid #252732; border-radius: 26px; display: flex; align-items: center; gap: 9px; padding-left: 20px; color: #f2f2f5; font-size: 24px; letter-spacing: -.5px; }
.vpn i { width: 20px; height: 20px; border-radius: 50%; background: linear-gradient(#313441, #313441) center / 12px 3px no-repeat #9a9cb0; }

.bookmarks { height: 66px; flex: none; background: #313441; padding: 0 0 10px 28px; display: grid; align-items: center; color: #fff; font-size: 24px;
  grid-template-columns: 98px 296px 64px 288px 299px 184px 145px 88px 228px 198px 180px 146px 586px 50px; }
.bookmarks a { display: flex; align-items: center; gap: 16px; white-space: nowrap; }
.bookmarks span { padding-bottom: 2px; letter-spacing: -.12px; }

/* page */
.page { flex: 1; display: flex; min-height: 0; background: #fff; color: #2d3b45; font-family: Lato, "Liberation Sans", sans-serif; }
.rail { width: 168px; background: #0c2651; color: #fff; display: flex; flex-direction: column; }
.logo { flex: none; }
.uc { font: 34px "Liberation Serif", serif; stroke: #fff; stroke-width: .6px; }
.davis { font: 800 31px "Open Sans", sans-serif; stroke: #fff; stroke-width: 1.400px; }
.canvas { font: bold 33px Roboto, "Liberation Sans", sans-serif; }
.item { height: 127px; flex: none; padding-top: 16px; display: flex; flex-direction: column; align-items: center; font-size: 28px; line-height: 34px; gap: 8px; white-space: nowrap; }
.item.on { background: #fff; color: #0c2651; }
.ico { height: 52px; display: flex; align-items: flex-end; }
.ico.mid { align-items: center; }
.collapse { margin: 134px 0 0 58px; }

.course { width: 661px; padding-left: 48px; font-size: 32px; color: #3e8aa8; display: flex; flex-direction: column; }
.term { height: 105px; padding: 48px 0 0 24px; font-size: 22px; line-height: 34px; font-style: italic; color: #2d3b45; }
.course a { height: 73.500px; padding-left: 12px; display: flex; align-items: center; width: 312px; }
.course .cur { border-left: 4px solid #2d3b45; padding-left: 8px; font-weight: bold; color: #2d3b45; }
.course b { margin-left: auto; width: 40px; height: 40px; border-radius: 50%; background: #55b0de; color: #fff; font-size: 22px; line-height: 40px; text-align: center; }

.quiz { width: 1198px; }
.box { border: 2px solid #a5a5a5; margin-bottom: 84px; }
.prev { height: 110px; border-top: 0; overflow: hidden; }
.prev .ans { margin-top: -29px; border-color: transparent; }
.box header { height: 102px; background: #f5f5f5; border-bottom: 2px solid #a5a5a5; display: flex; justify-content: space-between; padding: 0 40px; }
h2 { font-size: 38.300px; line-height: 46px; padding-top: 31px; color: #2d3b45; }
.pts { font-size: 34.500px; line-height: 40px; padding-top: 26px; font-weight: bold; color: #595959; }
.ask { height: 154px; padding: 62px 40px 0; font-size: 32px; line-height: 40px; display: flex; }
.ask code { margin: 2px 1px 0 8px; height: 42px; padding: 0 9px; border: 2px solid #c7cdd1; border-radius: 10px; background: #f5f5f5; font: italic 26.500px/37px Lato, sans-serif; color: #c22a2a; }
.ans { position: relative; height: 97px; margin: 0 40px; padding: 35px 0 0 60px; border-top: 2px solid #dadada; display: flex; font-size: 28px; line-height: 34px; }
.ans > span:last-child { margin: -3px 0 0 17px; }
.dim { border-color: #ebebeb; color: #969da2; }
.cb { width: 26px; height: 26px; flex: none; border: 2px solid #c9c9c9; border-radius: 5px; background: #f8f8f8; }
.dim .cb { border-color: #e4e4e4; background: #fcfcfc; }
.cb.on { border: 0; background: #cfcfcf; display: grid; place-items: center; }
.cb.on::after { content: ""; width: 9px; height: 17px; margin-top: -4px; border: solid #f4f4f4; border-width: 0 3.500px 3.500px 0; transform: rotate(38deg); }
.wrong { height: 103px; border: 4px solid #e0362a; border-bottom-color: #c93a2e; border-radius: 14px; margin-bottom: 16px; }
.last { height: 137px; }
.tag { position: absolute; left: -262px; top: 10px; display: grid; width: 252px; height: 54px; }
.tag svg, .tag b { grid-area: 1 / 1; }
.tag b { position: relative; color: #fff; padding-right: 16px; line-height: 54px; text-align: center; text-shadow: 0 -2px 2px rgba(0,0,0,.4); }
.tag.plain b { color: #333; text-shadow: none; }
.next header { border: 0; }

/* dock */
.dockbar { flex: 1; padding: 8px 0 0 79px; }
.dock {
  position: relative; z-index: 1; width: 2723px; height: 118px; border-radius: 32px; border: 2px solid rgba(255,255,255,.18);
  padding-left: 14.500px; display: flex; align-items: center; gap: 23.350px;
  background: linear-gradient(90deg, #1e1430 0, #1c1334 700px, #211447 1400px, #28134c 1660px, #45165f 1790px, #42155f 2000px, #35165a 2200px, #24133f 2480px, #22143f 100%);
  background-clip: padding-box;
  box-shadow: 0 -2px 70px 8px rgba(0,0,0,.28);
}
.app { position: relative; width: 72px; height: 72px; border-radius: 17px; margin-top: -10px; flex: none; box-shadow: 0 0 2px rgba(0,0,0,.5); }
.app > svg { width: 72px; height: 72px; overflow: visible; }
.run::after { content: ""; position: absolute; left: 32px; bottom: -24px; width: 8px; height: 8px; border-radius: 50%; background: #a99cc0; }
.count { position: absolute; right: -12px; top: -8px; width: 34px; height: 34px; border-radius: 50%; background: #e4503f; color: #fff; font-size: 22px; line-height: 34px; font-weight: 400; text-align: center; }
.white { background: linear-gradient(#fff, #f7f7f7); }
.finder { background: linear-gradient(#5cc4f7, #2e6cec); }
.messages, .facetime { background: linear-gradient(#83ee7c, #52b748); }
.zoomapp { background: linear-gradient(200deg, #3a7bea, #1f4fe6 40%, #1c49b8); }
.zt { font: 600 22px Inter, sans-serif; fill: #fff; }
.cal { background: #f8f7f5; }
.mon { font: 600 15px Inter, sans-serif; fill: #fff; }
.day { font: 300 43px Inter, sans-serif; fill: #222; }
.podcasts { background: linear-gradient(#bb64e6, #7027b0); }
.discord { background: linear-gradient(#7a83ef, #4c5ad9); }
.store { background: linear-gradient(#47b2ea, #2a5ed6); }
.launch { background: linear-gradient(#b9b3c9, #aea9c2); }
.notes { background: linear-gradient(#f9da5b 0, #f6c83a 18px, #f7f6f3 19px, #e9e8e3 100%); }
.photos g, .photos ellipse { mix-blend-mode: multiply; }
.music { background: linear-gradient(#ea6076, #e2353f); }
.pages { background: linear-gradient(#f3b04a, #ec8535); }
.tv { background: linear-gradient(#2b3634, #0c100f); }
.tvt { font: 500 31px Inter, sans-serif; fill: #fff; }
.numbers { background: linear-gradient(#8def79, #54c837); }
.keynote { background: linear-gradient(#5cbdf8, #2e63e8); }
.mail { background: linear-gradient(#3a6df0, #55b9f2); }
.term.app { height: 72px; padding: 0; background: linear-gradient(#cfd8ea, #77706f); }
.settings { background: linear-gradient(#c9d3d9, #86827d); }
.sep { width: 2px; height: 86px; background: #5c4f7c; margin: 0 4px 0 9px; }
.mini { position: relative; width: 82px; height: 46px; background: #131419; margin: -10px 0 0 -1px; padding: 3px 21px 0 17px; display: flex; flex-direction: column; gap: 7px; border-top: 3px solid #2b2d3a; }
.mini i { height: 12px; background: #2c2d31; }
.mini i + i { height: 21px; }
.mini span { position: absolute; right: 1px; bottom: -17px; width: 27px; height: 27px; border-radius: 7px; background: #fff; display: grid; place-items: center; }
.trash { margin-top: -14px; }
```
